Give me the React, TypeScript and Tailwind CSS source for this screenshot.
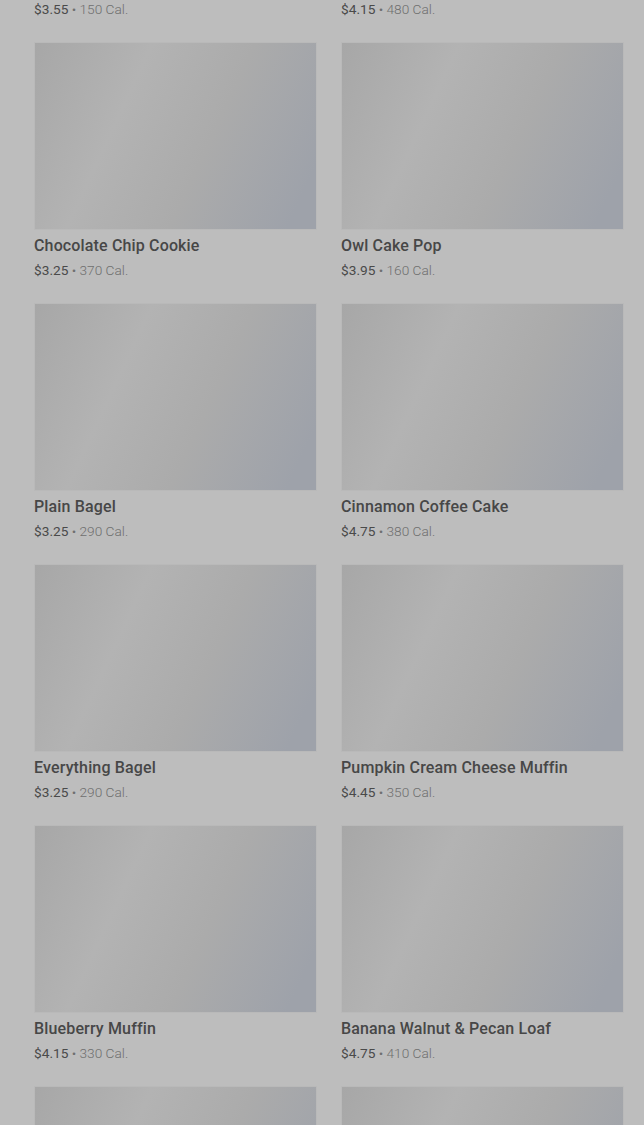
import React from 'react';

type Item = { name: string; price: string; cal: string };

const items: Item[] = [
    { name: 'Butter Croissant', price: '$3.55', cal: '150' },
    { name: 'Chocolate Croissant', price: '$4.15', cal: '480' },
    { name: 'Chocolate Chip Cookie', price: '$3.25', cal: '370' },
    { name: 'Owl Cake Pop', price: '$3.95', cal: '160' },
    { name: 'Plain Bagel', price: '$3.25', cal: '290' },
    { name: 'Cinnamon Coffee Cake', price: '$4.75', cal: '380' },
    { name: 'Everything Bagel', price: '$3.25', cal: '290' },
    { name: 'Pumpkin Cream Cheese Muffin', price: '$4.45', cal: '350' },
    { name: 'Blueberry Muffin', price: '$4.15', cal: '330' },
    { name: 'Banana Walnut & Pecan Loaf', price: '$4.75', cal: '410' },
    { name: 'Cheese Danish', price: '$3.75', cal: '290' },
    { name: 'Lemon Loaf', price: '$3.95', cal: '470' },
];

const Card: React.FC<{ item: Item }> = ({ item }) => (
    <div className="flex flex-col">
        <div className="h-[188px] w-full border border-[#b9b9b9] bg-[linear-gradient(115deg,#a7a7a7_0%,#b3b3b3_32%,#ababab_60%,#9ea2aa_92%)]" />
        <p className="mt-[5px] text-[16px] leading-[22px] font-medium tracking-[0.15px] text-[#474747]">{item.name}</p>
        <p className="mt-[3px] text-[13.7px] leading-[20px] font-light text-[#6f6f6f]">
            <span className="font-normal text-[#4a4a4a]">{item.price}</span> • {item.cal} Cal.
        </p>
    </div>
);

const App: React.FC = () => {
    return (
        <div
            className="h-[1125px] w-full overflow-hidden bg-[#bdbdbd]"
            style={{ fontFamily: 'Roboto, "Liberation Sans", sans-serif' }}
        >
            <div className="mt-[-219px] grid grid-cols-2 gap-x-[24px] gap-y-[23px] pl-[34px] pr-[20px]">
                {items.map((item) => (
                    <Card key={item.name} item={item} />
                ))}
            </div>
        </div>
    );
};

export default App;
